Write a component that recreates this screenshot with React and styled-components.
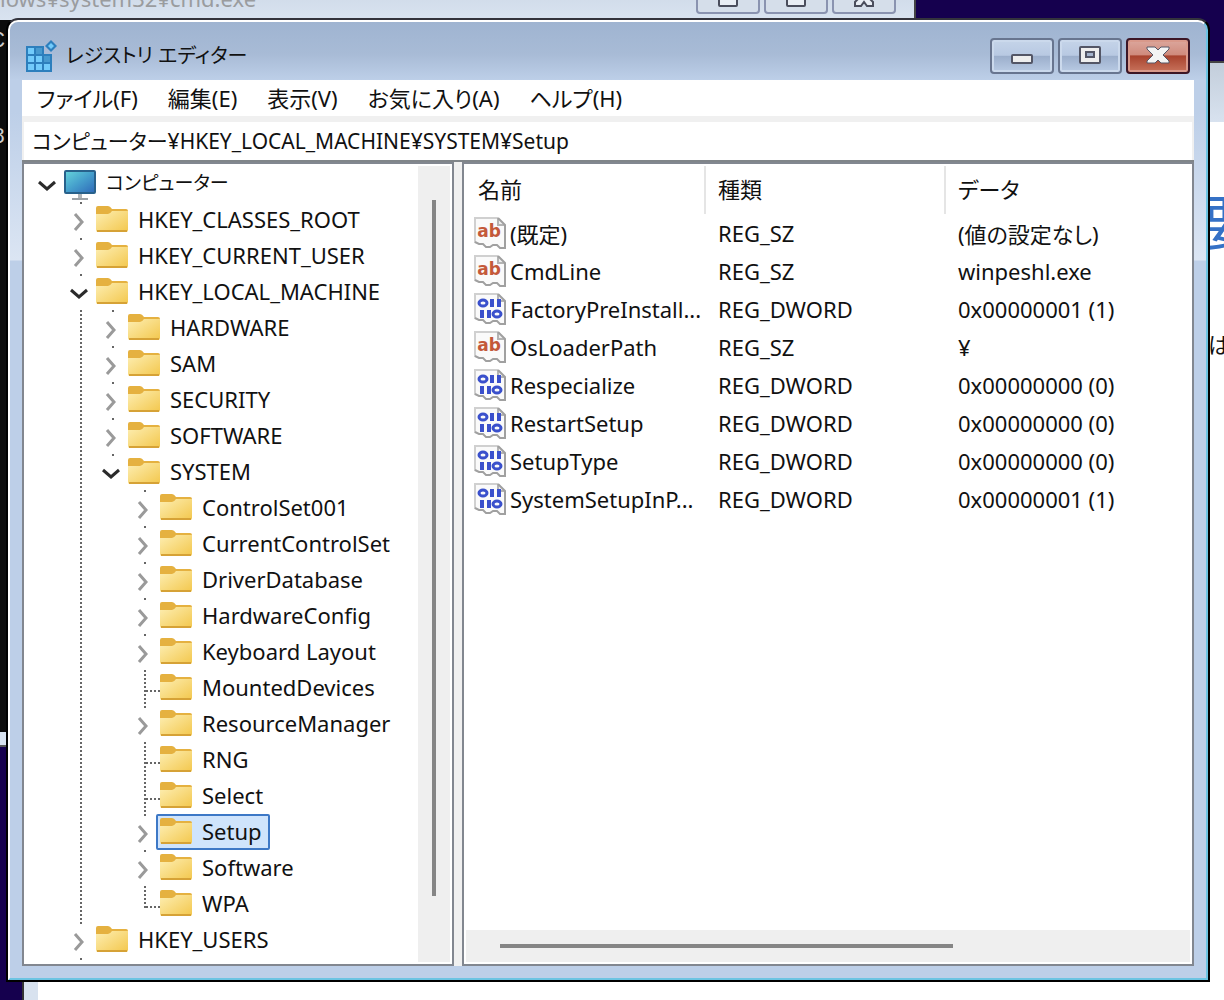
import React, { useState } from 'react'
import styled, { createGlobalStyle, css } from 'styled-components';

const GlobalStyle = createGlobalStyle`
  * {
    box-sizing: border-box;
  }

  body {
    margin: 0;
    background: #15004e;
    color: #111;
    font-family: "Noto Sans", "Noto Sans CJK JP", sans-serif;
    font-size: 22px;
    font-feature-settings: "palt";
  }

  button, input {
    font: inherit;
    font-feature-settings: inherit;
    color: inherit;
  }
`;

const treeItems = [
  { name: 'コンピューター', depth: 0, state: 'open', icon: 'computer' },
  { name: 'HKEY_CLASSES_ROOT', depth: 1, state: 'closed' },
  { name: 'HKEY_CURRENT_USER', depth: 1, state: 'closed' },
  { name: 'HKEY_LOCAL_MACHINE', depth: 1, state: 'open' },
  { name: 'HARDWARE', depth: 2, state: 'closed' },
  { name: 'SAM', depth: 2, state: 'closed' },
  { name: 'SECURITY', depth: 2, state: 'closed' },
  { name: 'SOFTWARE', depth: 2, state: 'closed' },
  { name: 'SYSTEM', depth: 2, state: 'open' },
  { name: 'ControlSet001', depth: 3, state: 'closed' },
  { name: 'CurrentControlSet', depth: 3, state: 'closed' },
  { name: 'DriverDatabase', depth: 3, state: 'closed' },
  { name: 'HardwareConfig', depth: 3, state: 'closed' },
  { name: 'Keyboard Layout', depth: 3, state: 'closed' },
  { name: 'MountedDevices', depth: 3 },
  { name: 'ResourceManager', depth: 3, state: 'closed' },
  { name: 'RNG', depth: 3 },
  { name: 'Select', depth: 3 },
  { name: 'Setup', depth: 3, state: 'closed' },
  { name: 'Software', depth: 3, state: 'closed' },
  { name: 'WPA', depth: 3, last: true },
  { name: 'HKEY_USERS', depth: 1, state: 'closed' },
];

const values = [
  { name: '(既定)', type: 'REG_SZ', data: '(値の設定なし)' },
  { name: 'CmdLine', type: 'REG_SZ', data: 'winpeshl.exe' },
  { name: 'FactoryPreInstall...', type: 'REG_DWORD', data: '0x00000001 (1)' },
  { name: 'OsLoaderPath', type: 'REG_SZ', data: '¥' },
  { name: 'Respecialize', type: 'REG_DWORD', data: '0x00000000 (0)' },
  { name: 'RestartSetup', type: 'REG_DWORD', data: '0x00000000 (0)' },
  { name: 'SetupType', type: 'REG_DWORD', data: '0x00000000 (0)' },
  { name: 'SystemSetupInP...', type: 'REG_DWORD', data: '0x00000001 (1)' },
];

const menus = ['ファイル(F)', '編集(E)', '表示(V)', 'お気に入り(A)', 'ヘルプ(H)'];

const RegistryIcon = () => (
  <svg width="32" height="32" viewBox="0 0 32 32" aria-hidden="true">
    <path d="M0 6h26v26H0z" fill="#2d7fbd" />
    <path d="M2 8h6v6H2zM2 16h6v6H2zM10 16h6v6h-6zM2 24h6v6H2zM10 24h6v6h-6zM18 24h6v6h-6z" fill="#72cbfb" />
    <path d="M10 8h6v6h-6z" fill="#4799cf" />
    <path d="M18 16h6v6h-6z" fill="#4799cf" />
    <path d="M18 5h9v9h-9z" fill="#a9bbd8" />
    <path d="M25 0l6 6-6 6-6-6z" fill="#2d7fbd" />
    <path d="M25 3l3 3-3 3-3-3z" fill="#72cbfb" />
  </svg>
);

const ComputerIcon = () => (
  <svg width="32" height="32" viewBox="0 0 32 32" aria-hidden="true">
    <defs>
      <linearGradient id="screen" x1="0" y1="0" x2="1" y2="1">
        <stop offset="0" stopColor="#66d5dc" />
        <stop offset="0.5" stopColor="#459fcc" />
        <stop offset="1" stopColor="#2e68b8" />
      </linearGradient>
    </defs>
    <rect x="1" y="3" width="30" height="22" rx="1" fill="url(#screen)" stroke="#28618b" strokeWidth="2" />
    <path d="M14 26h4v4h-4z" fill="#b2b7bb" />
    <path d="M8 30h16v2H8z" fill="#9ca2a7" />
  </svg>
);

const FolderIcon = () => (
  <svg width="32" height="32" viewBox="0 0 32 32" aria-hidden="true">
    <defs>
      <linearGradient id="folder" x1="0" y1="0" x2="1" y2="1">
        <stop offset="0" stopColor="#fdeeb2" />
        <stop offset="1" stopColor="#f3c74c" />
      </linearGradient>
    </defs>
    <path d="M0 4q0-2 2-2h10q2 0 4 3h14q2 0 2 2v8H0z" fill="#e5b140" />
    <path d="M0 10h12q2 0 4-3h16v19q0 2-2 2H2q-2 0-2-2z" fill="url(#folder)" />
    <path d="M1 27h30" stroke="#d6a236" strokeWidth="2" />
  </svg>
);

const Paper = ({ children }) => (
  <svg width="32" height="32" viewBox="0 0 32 32" aria-hidden="true">
    <path d="M1 1h23l7 7v23l-7-1-2-2-6 2-4-3-6-1-5-1z" fill="#fafafa" />
    <path d="M1 26V1h23" fill="none" stroke="#d0d0d0" strokeWidth="2" />
    <path d="M24 1v7h7" fill="#eee" stroke="#b4b4b4" strokeWidth="2" />
    <path d="M24 1l7 7v23h-5l-3-3h-4l-3 2h-4l-3-3H5l-4-2" fill="none" stroke="#a0a0a0" strokeWidth="2" />
    {children}
  </svg>
);

const StringIcon = () => (
  <Paper>
    <IconText x="15" y="20" textAnchor="middle">ab</IconText>
  </Paper>
);

const BinaryIcon = () => (
  <Paper>
    <g fill="none" stroke="#3a50cc">
      <ellipse cx="9" cy="10" rx="4" ry="3" strokeWidth="3" />
      <path d="M18 6v8M25 6v8M8 17v8M15 17v8" strokeWidth="4" />
      <ellipse cx="23" cy="21" rx="4" ry="3" strokeWidth="3" />
    </g>
  </Paper>
);

const Chevron = ({ open }) => (
  <svg width="20" height="20" viewBox="0 0 20 20" fill="none" aria-hidden="true">
    {open
      ? <path d="M2 7l8 7 8-7" stroke="#2b2b2b" strokeWidth="3" />
      : <path d="M6 3l7 8-7 8" stroke="#9a9a9a" strokeWidth="3" />}
  </svg>
);

const App = () => {
  const [selected, setSelected] = useState('Setup');

  return (
    <Desktop>
      <GlobalStyle />
      <ConsoleWindow>
        <ConsoleTitle>
          <span>lows¥system32¥cmd.exe</span>
          <ConsoleButtons>
            <ConsoleButton aria-label="コンソールを最小化">
              <svg width="24" height="20" viewBox="0 0 24 20">
                <rect x="3" y="6" width="18" height="12" rx="1" fill="#e8edf4" stroke="#4a4d5c" strokeWidth="2" />
              </svg>
            </ConsoleButton>
            <ConsoleButton aria-label="コンソールを最大化">
              <svg width="24" height="20" viewBox="0 0 24 20">
                <rect x="3" y="4" width="18" height="14" rx="1" fill="#e8edf4" stroke="#4a4d5c" strokeWidth="2" />
              </svg>
            </ConsoleButton>
            <ConsoleButton aria-label="コンソールを閉じる">
              <svg width="24" height="20" viewBox="0 0 24 20">
                <path d="M3 3h6l3 4 3-4h6l-4 7 4 4v4h-6l-3-4-3 4H3v-4l4-4z" fill="#e8edf4" stroke="#4a4d5c" strokeWidth="2" />
              </svg>
            </ConsoleButton>
          </ConsoleButtons>
        </ConsoleTitle>
        <ConsoleText>
          <span>C</span>
          <span>8</span>
        </ConsoleText>
      </ConsoleWindow>
      <SetupWindow>
        <SetupTitle />
        <SetupBody>
          <h1>要</h1>
          <p>は</p>
        </SetupBody>
      </SetupWindow>

      <Window>
        <Frame>
          <TitleBar>
            <RegistryIcon />
            <Title>レジストリ エディター</Title>
            <CaptionButton aria-label="最小化">
              <svg width="24" height="20" viewBox="0 0 24 20">
                <rect x="2" y="9" width="20" height="8" rx="1" fill="#eee" stroke="#535666" strokeWidth="2" />
              </svg>
            </CaptionButton>
            <CaptionButton aria-label="最大化">
              <svg width="24" height="20" viewBox="0 0 24 20">
                <rect x="2" y="1" width="20" height="16" rx="1" fill="#eee" stroke="#535666" strokeWidth="2" />
                <rect x="8" y="6" width="8" height="5" fill="#a5b4cd" stroke="#535666" strokeWidth="2" />
              </svg>
            </CaptionButton>
            <CaptionButton $close aria-label="閉じる">
              <svg width="24" height="20" viewBox="0 0 24 20">
                <path d="M1 1h8l3 3 3-3h8v2l-6 6 6 6v2h-8l-3-3-3 3H1v-2l6-6-6-6z" fill="#f4f4f4" stroke="#565666" strokeWidth="1" />
              </svg>
            </CaptionButton>
          </TitleBar>

          <Body>
            <MenuBar>
              {menus.map((menu) => <MenuButton key={menu}>{menu}</MenuButton>)}
            </MenuBar>
            <Address
              type="text"
              aria-label="アドレス"
              defaultValue="コンピューター¥HKEY_LOCAL_MACHINE¥SYSTEM¥Setup"
            />
            <Panels>
              <TreePanel>
                <Tree>
                  {treeItems.map((item) => (
                    <TreeRow key={item.name}>
                      {item.depth > 0 && <Cell />}
                      {item.depth > 1 && <Cell $line="full" />}
                      {item.depth > 2 && <Cell />}
                      {item.state ? (
                        <Cell $line={item.depth > 0 ? 'dot' : ''}>
                          <Toggle aria-label={item.name} aria-expanded={item.state === 'open'}>
                            <Chevron open={item.state === 'open'} />
                          </Toggle>
                        </Cell>
                      ) : (
                        <Cell $line={item.last ? 'half' : 'full'}><Branch /></Cell>
                      )}
                      <KeyButton $active={selected === item.name} onClick={() => setSelected(item.name)}>
                        {item.icon === 'computer' ? <ComputerIcon /> : <FolderIcon />}
                        <KeyLabel $small={item.icon === 'computer'}>{item.name}</KeyLabel>
                      </KeyButton>
                    </TreeRow>
                  ))}
                  <TreeTail aria-hidden="true">
                    <Cell />
                    <Cell $line="dot" />
                  </TreeTail>
                </Tree>
                <VerticalScroll><Thumb /></VerticalScroll>
              </TreePanel>

              <ValuePanel>
                <ValueArea>
                  <ValueTable>
                    <thead>
                      <tr>
                        <th>名前</th>
                        <th>種類</th>
                        <th>データ</th>
                      </tr>
                    </thead>
                    <tbody>
                      {values.map((value) => (
                        <tr key={value.name}>
                          <td>
                            <ValueName>
                              {value.type === 'REG_SZ' ? <StringIcon /> : <BinaryIcon />}
                              {value.name}
                            </ValueName>
                          </td>
                          <td>{value.type}</td>
                          <td>{value.data}</td>
                        </tr>
                      ))}
                    </tbody>
                  </ValueTable>
                </ValueArea>
                <HorizontalScroll><Thumb $wide /></HorizontalScroll>
              </ValuePanel>
            </Panels>
          </Body>
        </Frame>
      </Window>
    </Desktop>
  )
}

const Desktop = styled.div`
  position: relative;
  display: flex;
  min-height: 100vh;
  padding: 18px 14px 18px 6px;
  overflow: hidden;
  background: #15004e;
`;

/* windows behind the editor */
const ConsoleWindow = styled.div`
  position: absolute;
  top: -36px;
  left: -20px;
  right: 308px;
  height: 783px;
  background: #0c0c0c;
  border: 2px solid #444;
  border-bottom-color: #555;
  box-shadow: inset 0 -13px 0 #d7e2f0;
`;

const ConsoleTitle = styled.div`
  display: flex;
  justify-content: space-between;
  height: 54px;
  padding: 16px 18px 0;
  background: linear-gradient(#c6d2e2, #d9e3f0);
  color: #9a9c9f;
  line-height: 32px;
`;

const ConsoleButtons = styled.div`
  display: flex;
  gap: 4px;
`;

const ConsoleButton = styled.button`
  display: flex;
  align-items: center;
  justify-content: center;
  width: 64px;
  height: 32px;
  padding: 0;
  border: 2px solid #8a93b0;
  border-radius: 4px;
  background: #d5deea;
`;

const ConsoleText = styled.div`
  display: flex;
  flex-direction: column;
  gap: 64px;
  padding: 6px 10px;
  color: #ccc;
  font-family: "Liberation Mono", monospace;
  line-height: 32px;
`;

const SetupWindow = styled.div`
  position: absolute;
  top: 61px;
  left: 22px;
  right: -40px;
  bottom: -20px;
  background: #fff;
  border: 2px solid #444;
  border-left-color: #333;
`;

const SetupTitle = styled.div`
  height: 59px;
  background: linear-gradient(#c3cedb, #d8e2ef);
`;

const SetupBody = styled.div`
  display: flex;
  flex-direction: column;
  align-items: flex-end;
  height: 100%;
  padding: 60px 0 0;
  border-left: 14px solid #d8e2ef;

  h1 {
    margin: 0;
    color: #3571c6;
    font-size: 60px;
    font-weight: 400;
    line-height: 80px;
  }

  p {
    margin: 64px 32px 0;
    line-height: 36px;
  }
`;

/* registry editor */
const Window = styled.main`
  position: relative;
  display: flex;
  flex: 1;
  min-width: 0;
  border: 2px solid #000;
  border-top-color: #33333c;
  border-radius: 12px 12px 0 0;
  background: #000;
`;

const Frame = styled.div`
  display: flex;
  flex: 1;
  flex-direction: column;
  min-width: 0;
  border: 2px solid #fff;
  border-right-color: #6cc4e2;
  border-bottom-color: #6cc4e2;
  border-radius: 10px 10px 0 0;
  background: linear-gradient(#9fb4d1, #a8bbd6 32px, #bdcfe8 58px, #bdcfe8 90px, #dbe5f3 238px, #bdcfe8 239px);
`;

const TitleBar = styled.header`
  display: flex;
  align-items: center;
  gap: 4px;
  height: 58px;
  padding: 10px 16px 0;
`;

const Title = styled.h1`
  flex: 1;
  margin: 0;
  padding-left: 4px;
  font-size: 20px;
  font-weight: 400;
  line-height: 32px;
`;

const CaptionButton = styled.button`
  display: flex;
  align-items: center;
  justify-content: center;
  width: 64px;
  height: 36px;
  padding: 0;
  border: 2px solid #68758f;
  border-radius: 4px;
  background: linear-gradient(#c5d4e9 0, #b8c9e2 48%, #9baecb 50%, #b9cbe4 100%);
  box-shadow: inset 0 0 0 2px #cbd9ec;

  ${({ $close }) => $close && css`
    border-color: #3c1626;
    background: linear-gradient(#dca79d 0, #cf8b7d 46%, #a8432e 50%, #c8735c 100%);
    box-shadow: inset 0 0 0 2px #d9998b;
  `}
`;

const Body = styled.div`
  display: flex;
  flex: 1;
  flex-direction: column;
  margin: 0 12px 12px;
  background: #f0f0f0;
`;

const MenuBar = styled.nav`
  display: flex;
  height: 36px;
  background: #fff;
`;

const MenuButton = styled.button`
  padding: 0 15px;
  border: 0;
  background: none;
  line-height: 36px;
  white-space: nowrap;
`;

const Address = styled.input`
  height: 38px;
  margin: 6px 2px 0;
  padding: 0 8px 2px;
  border: 0;
  outline: 0;
  background: #fff;
  font-size: 21px;
`;

const Panels = styled.div`
  display: flex;
  flex: 1;
  gap: 8px;
  border-top: 2px solid #808589;
`;

const panel = css`
  display: flex;
  border: 2px solid #828790;
  background: #fff;
`;

const TreePanel = styled.section`
  ${panel}
  width: 432px;
  padding-right: 2px;
`;

const Tree = styled.ul`
  flex: 1;
  margin: 0;
  padding: 2px 0 0 8px;
  list-style: none;
`;

const TreeRow = styled.li`
  display: flex;
  height: 36px;
`;

const TreeTail = styled.li`
  display: flex;
  height: 6px;
`;

const dots = 'repeating-linear-gradient(#666 0 2px, transparent 2px 4px)';

const lineSize = { full: '2px 36px', half: '2px 22px', dot: '2px 2px' };

const Cell = styled.span`
  display: flex;
  flex: none;
  align-items: center;
  justify-content: center;
  width: 32px;
  ${({ $line }) => $line && css`
    background-image: ${dots};
    background-position: 16px 0;
    background-repeat: no-repeat;
    background-size: ${lineSize[$line]};
  `}
`;

const Branch = styled.span`
  width: 14px;
  height: 2px;
  margin: 6px 0 0 18px;
  background: repeating-linear-gradient(90deg, #666 0 2px, transparent 2px 4px);
`;

const Toggle = styled.button`
  display: flex;
  margin: 2px 2px 0 0;
  padding: 0;
  border: 0;
  background: none;
`;

const KeyButton = styled.button`
  display: flex;
  align-items: center;
  gap: 10px;
  margin-left: -4px;
  padding: 0 6px 0 2px;
  border: 2px solid ${({ $active }) => ($active ? '#3d78c6' : 'transparent')};
  border-radius: 2px;
  background: ${({ $active }) => ($active ? '#cfe4fc' : 'none')};
  line-height: 30px;
  white-space: nowrap;
`;

const KeyLabel = styled.span`
  padding-bottom: 2px;
  font-size: ${({ $small }) => ($small ? '19px' : '22px')};
`;

const IconText = styled.text`
  fill: #c4593a;
  font: bold 17px "DejaVu Sans", sans-serif;
`;

const VerticalScroll = styled.div`
  display: flex;
  width: 32px;
  margin: 2px 0;
  padding: 34px 14px 66px;
  background: #efefef;
`;

const HorizontalScroll = styled.div`
  display: flex;
  height: 32px;
  margin: 0 2px 2px;
  padding: 14px 34px;
  background: #efefef;
`;

const Thumb = styled.div`
  width: ${({ $wide }) => ($wide ? '69%' : '4px')};
  background: #858585;
`;

const ValuePanel = styled.section`
  ${panel}
  flex: 1;
  flex-direction: column;
  min-width: 0;
`;

const ValueArea = styled.div`
  flex: 1;
  padding: 2px 2px 0;
`;

const ValueTable = styled.table`
  width: 100%;
  border-collapse: separate;
  border-spacing: 0;
  table-layout: fixed;
  text-align: left;
  white-space: nowrap;

  th {
    width: 240px;
    height: 48px;
    padding: 0 12px 4px;
    border-right: 2px solid #e5e5e5;
    font-weight: 400;
  }

  th:last-child {
    width: auto;
    border-right: 0;
  }

  td {
    height: 38px;
    padding: 0 12px;
  }

  td:first-child {
    padding: 0 0 0 8px;
  }
`;

const ValueName = styled.span`
  display: flex;
  align-items: center;
  gap: 4px;
`;

export default App
